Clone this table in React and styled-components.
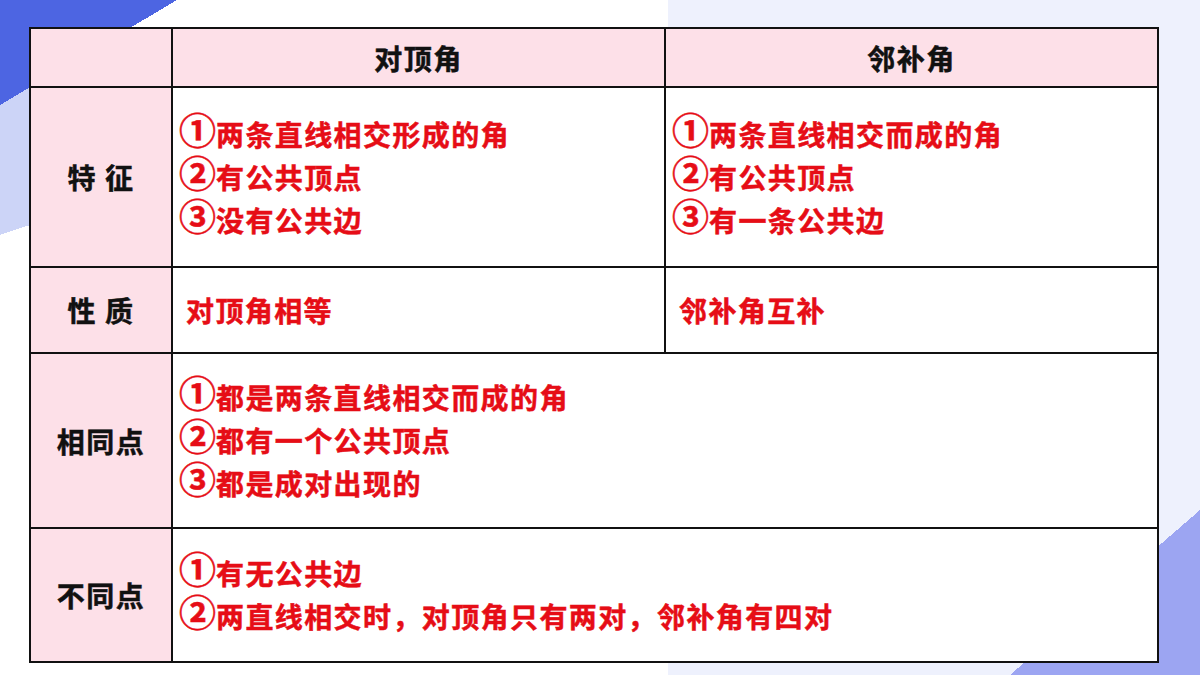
import React from "react";
import styled, { createGlobalStyle } from "styled-components";

const GlobalStyle = createGlobalStyle`
  html, body {
    margin: 0;
    padding: 0;
    background: #ffffff;
  }
  * {
    box-sizing: border-box;
  }
`;

const Page = styled.div`
  width: 1200px;
  height: 675px;
  overflow: hidden;
  padding: 27px 0 0 29px;
  font-family: "Noto Sans CJK SC", "Noto Sans", sans-serif;
  background-color: #ffffff;
  background-repeat: no-repeat;
  background-image:
    linear-gradient(to bottom right, #4d65e2 50%, transparent 50%),
    linear-gradient(to bottom right, transparent 50%, #9ca5f2 50%),
    linear-gradient(161.57deg, #ccd4f7 94%, transparent 94%),
    linear-gradient(#eef1fd, #eef1fd);
  background-size: 177px 105px, 190px 165px, 30px 240px, 532px 675px;
  background-position: 0 0, right bottom, 0 0, right top;
`;

const Table = styled.div`
  display: grid;
  grid-template-columns: 140px 491px 491px;
  grid-template-rows: 57px 178px 84px 173px 132px;
  gap: 2px;
  width: 1130px;
  padding: 2px;
  background: #111111;
`;

const Head = styled.div`
  display: flex;
  align-items: center;
  justify-content: center;
  background: #fde0e8;
  color: #111111;
  font-size: 28px;
  font-weight: 700;
  letter-spacing: 1.5px;
  -webkit-text-stroke: 0.5px #111111;
`;

const Body = styled.div`
  display: flex;
  flex-direction: column;
  justify-content: center;
  padding-left: 13px;
  background: #ffffff;
  color: #e60d16;
  font-size: 28px;
  font-weight: 700;
  line-height: 43px;
  letter-spacing: 1.4px;
  -webkit-text-stroke: 0.5px #e60d16;
  grid-column: ${(p) => (p.$wide ? "span 2" : "auto")};
  white-space: nowrap;
`;

const Num = styled.span`
  font-size: 37px;
  line-height: 0;
  letter-spacing: 0;
  margin-left: -7px;
  vertical-align: 1px;
`;

const rows = [
  {
    label: "特 征",
    cells: [
      ["①两条直线相交形成的角", "②有公共顶点", "③没有公共边"],
      ["①两条直线相交而成的角", "②有公共顶点", "③有一条公共边"],
    ],
  },
  {
    label: "性 质",
    cells: [["对顶角相等"], ["邻补角互补"]],
  },
  {
    label: "相同点",
    cells: [["①都是两条直线相交而成的角", "②都有一个公共顶点", "③都是成对出现的"]],
  },
  {
    label: "不同点",
    cells: [["①有无公共边", "②两直线相交时，对顶角只有两对，邻补角有四对"]],
  },
];

function Line({ text }) {
  const first = text[0];
  if ("①②③".includes(first)) {
    return (
      <div>
        <Num>{first}</Num>
        {text.slice(1)}
      </div>
    );
  }
  return <div>{text}</div>;
}

export default function App() {
  return (
    <>
      <GlobalStyle />
      <Page>
        <Table>
          <Head />
          <Head>对顶角</Head>
          <Head>邻补角</Head>
          {rows.map((row) => (
            <React.Fragment key={row.label}>
              <Head>{row.label}</Head>
              {row.cells.map((lines, i) => (
                <Body key={i} $wide={row.cells.length === 1}>
                  {lines.map((line) => (
                    <Line key={line} text={line} />
                  ))}
                </Body>
              ))}
            </React.Fragment>
          ))}
        </Table>
      </Page>
    </>
  );
}
